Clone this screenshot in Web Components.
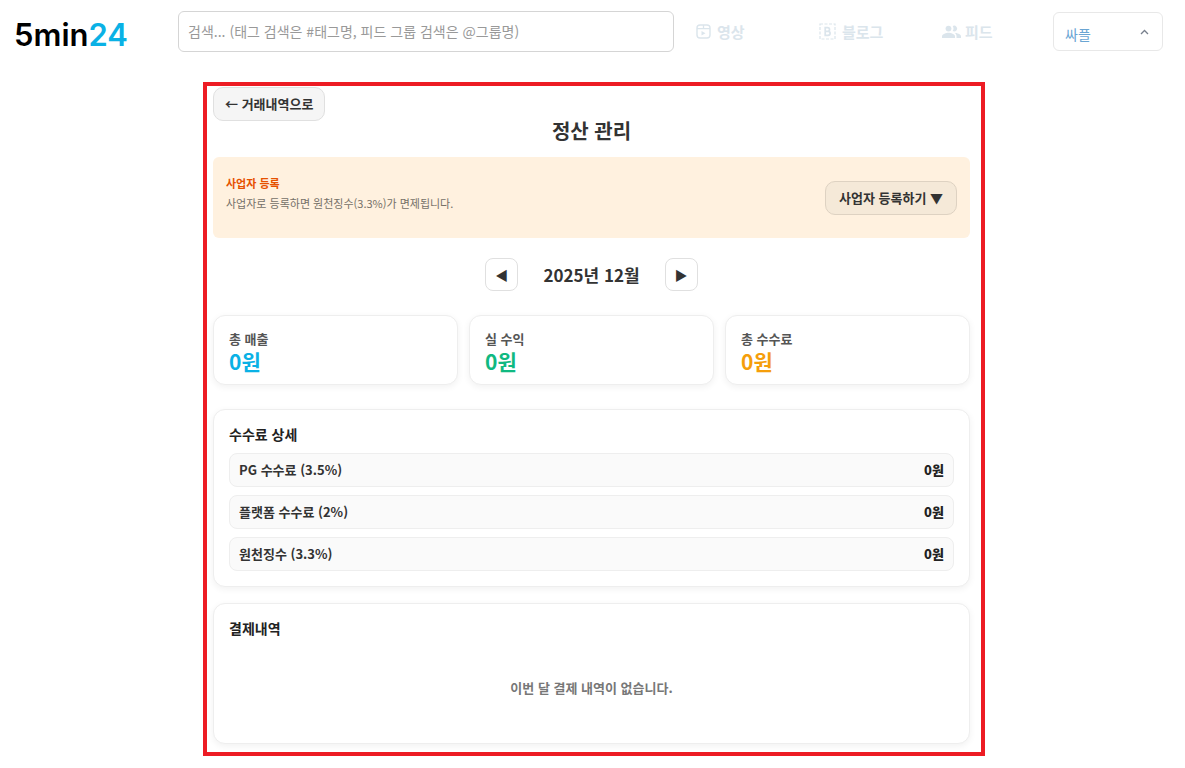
<!DOCTYPE html>
<html lang="ko">
<head>
<meta charset="utf-8">
<meta name="viewport" content="width=device-width, initial-scale=1">
<title>정산 관리</title>
<style>
	body {
		margin: 0;
		background: #fff;
		color: #333;
		font: 13px/20px "Noto Sans CJK KR", sans-serif;
	}
</style>
</head>
<body>

<site-header></site-header>
<page-frame>
	<page-title heading="정산 관리">← 거래내역으로</page-title>
	<register-notice heading="사업자 등록" action="사업자 등록하기 ▼">사업자로 등록하면 원천징수(3.3%)가 면제됩니다.</register-notice>
	<month-picker>2025년 12월</month-picker>
	<stat-grid>
		<stat-card label="총 매출" color="#0ab1e5">0원</stat-card>
		<stat-card label="실 수익" color="#10b981">0원</stat-card>
		<stat-card label="총 수수료" color="#f59e0b">0원</stat-card>
	</stat-grid>
	<content-card heading="수수료 상세">
		<fee-row label="PG 수수료 (3.5%)">0원</fee-row>
		<fee-row label="플랫폼 수수료 (2%)">0원</fee-row>
		<fee-row label="원천징수 (3.3%)">0원</fee-row>
	</content-card>
	<content-card heading="결제내역">
		<empty-message>이번 달 결제 내역이 없습니다.</empty-message>
	</content-card>
</page-frame>

<script>
const baseStyle = `
	* { box-sizing: border-box; }
	:host { display: block; box-sizing: border-box; }
	button, input { font: inherit; color: inherit; margin: 0; }
	button { cursor: pointer; }
	h1, h2, p { margin: 0; }
`;

class BaseComponent extends HTMLElement {
	constructor() {
		super();
		var template = document.createElement("template");
		template.innerHTML = `<style>${baseStyle}</style>${this.render()}`;
		this
			.attachShadow({mode: 'open'})
			.appendChild(template.content.cloneNode(true));
	}

	attr(name) {
		return this.getAttribute(name) || "";
	}
}

class SiteHeader extends BaseComponent {
	render() {
		return `
<style>
	header {
		display: grid;
		grid-template-columns: 152px minmax(0, 1fr) auto 110px;
		column-gap: 12px;
		align-items: center;
		padding: 11px 22px 0 14px;
	}
	.logo {
		color: #000;
		font: 600 31px/35px Inter, sans-serif;
		text-decoration: none;
		padding-top: 6px;
	}
	.logo span { color: #0ab1e5; }
	input {
		width: 100%;
		height: 41px;
		padding: 0 9px 2px;
		border: 1px solid #d5d5d5;
		border-radius: 6px;
		background: #fff;
		font-size: 14px;
		outline: none;
	}
	input::placeholder { color: #999; opacity: 1; }
	nav {
		display: grid;
		grid-template-columns: 111px 111px 99px;
		column-gap: 12px;
		margin-left: 10px;
	}
	nav a {
		display: flex;
		align-items: center;
		gap: 6px;
		color: #dbe5ec;
		font-size: 15px;
		font-weight: 600;
		text-decoration: none;
	}
	nav a:last-child { gap: 4px; }
	nav svg { flex: none; }
	.user {
		display: flex;
		align-items: center;
		justify-content: space-between;
		height: 39px;
		padding: 0 13px 0 11px;
		border: 1px solid #e8e8e8;
		border-radius: 6px;
		background: #fff;
		color: #6aa5d3;
		font-size: 14px;
	}
	.user span { padding-top: 4px; }
</style>
<header>
	<a class="logo" href="#">5min<span>24</span></a>
	<input type="search" aria-label="검색" placeholder="검색... (태그 검색은 #태그명, 피드 그룹 검색은 @그룹명)">
	<nav>
		<a href="#">
			<svg width="15" height="15" viewBox="0 0 15 15" fill="none" stroke="currentColor">
				<rect x="1" y="1" width="13" height="13" rx="3" stroke-width="1.4"/>
				<path d="M1 4.7h13M7.5 1v3.7" stroke-width="1.3"/>
				<path d="M5.5 7v4.5l4-2.2z" fill="currentColor" stroke="none"/>
			</svg>
			영상
		</a>
		<a href="#">
			<svg width="17" height="17" viewBox="0 0 17 17" fill="none" stroke="currentColor">
				<rect x="1" y="1" width="15" height="15" stroke-width="1.2" stroke-dasharray="3 1.5"/>
				<path d="M6.2 4.7v7.6h2.9a2 2 0 0 0 0-4H6.2h2.5a1.8 1.8 0 0 0 0-3.6z" stroke-width="1.7"/>
			</svg>
			블로그
		</a>
		<a href="#">
			<svg width="19" height="14" viewBox="0 0 19 14" fill="currentColor">
				<circle cx="6.5" cy="3.6" r="2.9"/>
				<path d="M0 13v-1.8C0 8.9 4.3 7.7 6.5 7.7s6.5 1.2 6.5 3.5V13z"/>
				<path d="M10.7 1.1a2.9 2.9 0 1 1 0 5 4.6 4.6 0 0 0 0-5zM12.7 7.8c2.1.3 6.3 1.3 6.3 3.4V13h-4.5v-1.8c0-1.4-.7-2.5-1.8-3.4z"/>
			</svg>
			피드
		</a>
	</nav>
	<button class="user" type="button" aria-haspopup="menu">
		<span>싸플</span>
		<svg width="9" height="6" viewBox="0 0 9 6" fill="none" stroke="#777f8c" stroke-width="1.3"><path d="M1 5l3.5-3.5L8 5"/></svg>
	</button>
</header>`;
	}
}

class PageFrame extends BaseComponent {
	render() {
		return `
<style>
	:host { padding: 30px 0 12px 3px; }
	main {
		max-width: 782px;
		margin: 0 auto;
		padding: 1px 11px 8px 6px;
		border: 4px solid #ed1c24;
	}
</style>
<main><slot></slot></main>`;
	}
}

class PageTitle extends BaseComponent {
	render() {
		return `
<style>
	button {
		display: block;
		height: 34px;
		padding: 0 11px;
		border: 1px solid #e0e0e0;
		border-radius: 10px;
		background: #f5f5f5;
		font-weight: 700;
	}
	h1 {
		padding-bottom: 16px;
		font-size: 20px;
		line-height: 20px;
		text-align: center;
	}
</style>
<button type="button"><slot></slot></button>
<h1>${this.attr("heading")}</h1>`;
	}
}

class RegisterNotice extends BaseComponent {
	render() {
		return `
<style>
	section {
		display: flex;
		align-items: center;
		justify-content: space-between;
		min-height: 81px;
		padding: 16px 13px;
		border-radius: 6px;
		background: #fff1df;
	}
	.text { align-self: flex-start; }
	h2 {
		color: #e65100;
		font-size: 11px;
		line-height: 20px;
	}
	p {
		color: #757068;
		font-size: 11px;
	}
	button {
		height: 34px;
		padding: 0 13px;
		border: 1px solid #ded2c2;
		border-radius: 10px;
		background: #f5e9d8;
		font-weight: 700;
	}
</style>
<section>
	<div class="text">
		<h2>${this.attr("heading")}</h2>
		<p><slot></slot></p>
	</div>
	<button type="button">${this.attr("action")}</button>
</section>`;
	}
}

class MonthPicker extends BaseComponent {
	render() {
		return `
<style>
	:host {
		display: flex;
		align-items: center;
		justify-content: center;
		gap: 25px;
		padding: 20px 0 24px;
	}
	button {
		width: 33px;
		height: 33px;
		padding: 0;
		border: 1px solid #e0e0e0;
		border-radius: 8px;
		background: #fff;
	}
	strong { font-size: 17px; }
</style>
<button type="button" aria-label="이전 달">◀</button>
<strong><slot></slot></strong>
<button type="button" aria-label="다음 달">▶</button>`;
	}
}

class StatGrid extends BaseComponent {
	render() {
		return `
<style>
	:host {
		display: grid;
		grid-template-columns: repeat(3, minmax(0, 1fr));
		gap: 11px;
	}
</style>
<slot></slot>`;
	}
}

class StatCard extends BaseComponent {
	render() {
		return `
<style>
	:host {
		padding: 13px 15px 10px;
		border: 1px solid #eee;
		border-radius: 12px;
		background: #fff;
		box-shadow: 0 2px 7px rgba(0, 0, 0, 0.06);
	}
	.label {
		color: #555;
		font-weight: 600;
	}
	.value {
		color: ${this.attr("color")};
		font-size: 21px;
		font-weight: 700;
		line-height: 25px;
	}
</style>
<div class="label">${this.attr("label")}</div>
<div class="value"><slot></slot></div>`;
	}
}

class ContentCard extends BaseComponent {
	render() {
		return `
<style>
	:host {
		margin-top: 16px;
		padding: 14px 15px 15px;
		border: 1px solid #eee;
		border-radius: 12px;
		background: #fff;
		box-shadow: 0 2px 7px rgba(0, 0, 0, 0.06);
	}
	:host(:first-of-type) { margin-top: 24px; }
	h2 {
		padding-bottom: 9px;
		color: #222;
		font-size: 14px;
		line-height: 20px;
	}
	.items {
		display: grid;
		gap: 8px;
	}
</style>
<h2>${this.attr("heading")}</h2>
<div class="items"><slot></slot></div>`;
	}
}

class FeeRow extends BaseComponent {
	render() {
		return `
<style>
	:host {
		display: flex;
		align-items: center;
		justify-content: space-between;
		height: 34px;
		padding: 0 9px;
		border: 1px solid #eee;
		border-radius: 8px;
		background: #fafafa;
		font-weight: 600;
	}
	strong { color: #222; }
</style>
<span>${this.attr("label")}</span>
<strong><slot></slot></strong>`;
	}
}

class EmptyMessage extends BaseComponent {
	render() {
		return `
<style>
	:host {
		padding: 31px 0 30px;
		color: #777;
		font-weight: 600;
		text-align: center;
	}
</style>
<slot></slot>`;
	}
}

customElements.define('site-header', SiteHeader);
customElements.define('page-frame', PageFrame);
customElements.define('page-title', PageTitle);
customElements.define('register-notice', RegisterNotice);
customElements.define('month-picker', MonthPicker);
customElements.define('stat-grid', StatGrid);
customElements.define('stat-card', StatCard);
customElements.define('content-card', ContentCard);
customElements.define('fee-row', FeeRow);
customElements.define('empty-message', EmptyMessage);
</script>
</body>
</html>
